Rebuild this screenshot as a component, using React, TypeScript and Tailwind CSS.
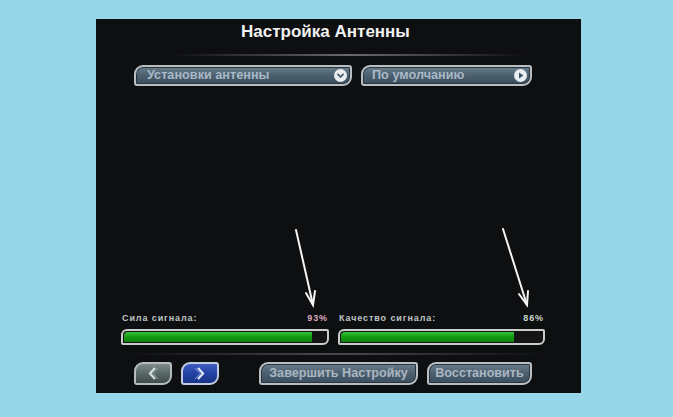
import React from "react";

const font = { fontFamily: '"Liberation Sans", Arial, sans-serif' };

function Pill({
  width,
  children,
  className = "",
}: {
  width: string;
  children: React.ReactNode;
  className?: string;
}) {
  return (
    <div
      className={`${width} h-[21px] rounded-tl-[9px] rounded-br-[9px] rounded-tr-[3px] rounded-bl-[3px] border-2 border-[#b9bec3] bg-gradient-to-b from-[#6a7d8b] via-[#4b5f6e] to-[#3c4f5e] shadow-[inset_0_0_0_1px_#2a3540] flex items-center ${className}`}
    >
      {children}
    </div>
  );
}

function Bar({ width, pct }: { width: string; pct: number }) {
  return (
    <div
      className={`${width} h-[16px] rounded-tl-[6px] rounded-br-[6px] rounded-tr-[2px] rounded-bl-[2px] border-2 border-[#c9cdc9] bg-[#141414] p-[1px] flex`}
    >
      <div
        className="h-full rounded-tl-[4px] bg-gradient-to-b from-[#37c437] via-[#139a13] to-[#0d820d]"
        style={{ width: `${pct}%` }}
      />
    </div>
  );
}

export default function App() {
  return (
    <div
      className="relative w-[673px] h-[417px] bg-[#98d7ea] overflow-hidden"
      style={font}
    >
      <div className="absolute left-[96px] top-[19px] w-[485px] h-[374px] bg-[#0e0f11] flex flex-col">
        {/* title */}
        <div className="h-[22px] mt-[2px] flex justify-center pr-[26px]">
          <span className="text-[17px] font-bold text-[#f2f2f2] leading-[22px]">
            Настройка Антенны
          </span>
        </div>
        <div className="mt-[11px] ml-[77px] w-[354px] h-[2px] bg-gradient-to-r from-transparent via-[#6a6a6c] to-transparent" />

        {/* option selectors */}
        <div className="mt-[9px] ml-[38px] flex gap-[9px]">
          <Pill width="w-[218px]" className="pl-[11px] pr-[3px] justify-between">
            <span className="text-[12.7px] font-bold text-[#a9b9c8] leading-none">
              Установки антенны
            </span>
            <span className="w-[13px] h-[13px] rounded-full bg-[#e9eef2] flex items-center justify-center">
              <svg width="7" height="5" viewBox="0 0 7 5">
                <path d="M0.5 0.8 L3.5 4 L6.5 0.8" fill="none" stroke="#3e5161" strokeWidth="1.6" />
              </svg>
            </span>
          </Pill>
          <Pill width="w-[171px]" className="pl-[9px] pr-[3px] justify-between">
            <span className="text-[12.7px] font-bold text-[#a9b9c8] leading-none">
              По умолчанию
            </span>
            <span className="w-[13px] h-[13px] rounded-full bg-[#e9eef2] flex items-center justify-center">
              <svg width="6" height="7" viewBox="0 0 6 7">
                <path d="M1 0.5 L5.5 3.5 L1 6.5 Z" fill="#3e5161" />
              </svg>
            </span>
          </Pill>
        </div>

        <div className="flex-1" />

        {/* signal meters */}
        <div className="ml-[25px] flex gap-[9px]">
          <div className="w-[208px] flex flex-col">
            <div className="flex justify-between px-[1px] mb-[5px] text-[9px] font-bold tracking-[0.9px] leading-[11px]">
              <span className="text-[#bfc6c6]">Сила сигнала:</span>
              <span className="text-[#d9a9bb]">93%</span>
            </div>
            <Bar width="w-[208px]" pct={93} />
          </div>
          <div className="w-[207px] flex flex-col">
            <div className="flex justify-between px-[1px] mb-[5px] text-[9px] font-bold tracking-[0.9px] leading-[11px]">
              <span className="text-[#bfc6c6]">Качество сигнала:</span>
              <span className="text-[#c9d6c9]">86%</span>
            </div>
            <Bar width="w-[207px]" pct={86} />
          </div>
        </div>

        <div className="mt-[8px] ml-[34px] w-[414px] h-[2px] bg-gradient-to-r from-transparent via-[#4a4a4c] to-transparent" />

        {/* navigation buttons */}
        <div className="mt-[7px] mb-[8px] ml-[38px] flex items-center">
          <div className="w-[38px] h-[23px] rounded-tl-[9px] rounded-br-[9px] rounded-tr-[3px] rounded-bl-[3px] border-2 border-[#b5bcbc] bg-gradient-to-b from-[#7d8c8a] via-[#586866] to-[#3e4c4c] flex items-center justify-center">
            <svg width="12" height="13" viewBox="0 0 12 13">
              <path d="M8 1 L3 6.5 L8 12" fill="none" stroke="#d5dddd" strokeWidth="2.2" />
              <path d="M11 1 L6 6.5 L11 12" fill="none" stroke="#8ea19f" strokeWidth="1" />
            </svg>
          </div>
          <div className="ml-[9px] w-[38px] h-[23px] rounded-tl-[9px] rounded-br-[9px] rounded-tr-[3px] rounded-bl-[3px] border-2 border-[#c3cbe0] bg-gradient-to-b from-[#3f5cc0] via-[#2343a4] to-[#1a3388] flex items-center justify-center">
            <svg width="12" height="13" viewBox="0 0 12 13">
              <path d="M4 1 L9 6.5 L4 12" fill="none" stroke="#e0e6f6" strokeWidth="2.2" />
              <path d="M1 1 L6 6.5 L1 12" fill="none" stroke="#7f95d6" strokeWidth="1" />
            </svg>
          </div>
          <Pill
            width="w-[159px]"
            className="ml-[40px] h-[23px] justify-center"
          >
            <span className="text-[12.6px] font-bold text-[#aab6c2] leading-none">
              Завершить Настройку
            </span>
          </Pill>
          <Pill width="w-[105px]" className="ml-[9px] h-[23px] justify-center">
            <span className="text-[12.6px] font-bold text-[#aab6c2] leading-none">
              Восстановить
            </span>
          </Pill>
        </div>
      </div>

      {/* pointer arrows */}
      <svg
        className="absolute left-0 top-0 pointer-events-none"
        width="673"
        height="417"
        viewBox="0 0 673 417"
      >
        <g stroke="#f4f4f4" strokeWidth="2" fill="none" strokeLinecap="round">
          <path d="M296 230 L313 305" />
          <path d="M306 293 L313 305 L315 291" />
          <path d="M503 229 L527 305" />
          <path d="M519 294 L527 305 L528 291" />
        </g>
      </svg>
    </div>
  );
}
